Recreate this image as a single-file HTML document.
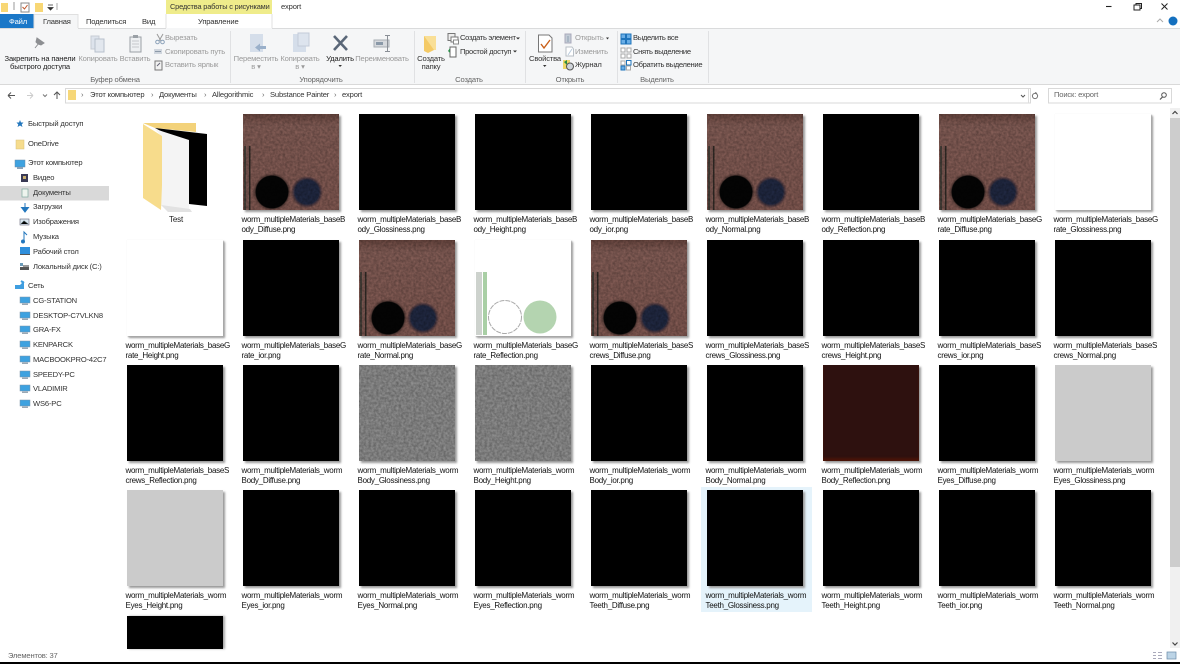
<!DOCTYPE html>
<html><head><meta charset="utf-8"><style>
html,body{margin:0;padding:0;width:1180px;height:664px;overflow:hidden;background:#fff}
body{position:relative;font-family:"Liberation Sans","Noto Sans CJK SC",sans-serif;color:#222;filter:blur(.3px)}
.t{position:absolute;white-space:nowrap;font-size:7.6px;letter-spacing:-.17px;line-height:10px;height:10px;color:#333}
.m{letter-spacing:-.32px}
.g{color:#9a9a9a}.c{transform:translateX(-50%)}.k{color:#666}
.s{position:absolute;left:0;top:0}
.r{position:absolute;width:1px;top:31px;height:52px;background:#e0e1e3}
.i{position:absolute;width:116px;height:125px}
.i i{position:absolute;left:0;top:0;width:96px;height:96px;box-shadow:2px 2px 2px #999;display:block}
.i span{position:absolute;left:-1.5px;top:101px;width:112px;font-size:8px;letter-spacing:-.27px;line-height:10px;color:#111;white-space:pre}
.b i{background:#000}
.w i{background:#fff;box-shadow:1px 1px 1px #aaa,2px 2px 2px #999,0 0 1px #eee}
.l i{background:#cbcbcb}
.n i{background:#7a7a7a}
.e i{background:#2e110f;box-shadow:2px 2px 2px #999,inset 0 -3px 2px #4a1408}
.d i{background:
radial-gradient(circle at 29px 78px,#030303 0 16px,rgba(0,0,0,.3) 17px,transparent 19px),
radial-gradient(circle at 64px 78px,#1b2238 0 12px,rgba(20,20,40,.45) 14px,transparent 16px),
linear-gradient(90deg,transparent 1px,#3c3630 1px 3px,#6a4b46 3px 6px,#2a2420 6px 7.5px,transparent 7.5px) 0 32px/100% 64px no-repeat,
linear-gradient(180deg,#5a3c36 0,#71504a 12%,#6e4b45 100%)}
.n i::after,.d i::after{content:"";position:absolute;left:0;top:0;width:96px;height:96px;background:#808080;filter:url(#gn);mix-blend-mode:overlay;opacity:.22}
</style></head><body>
<svg width="0" height="0" style="position:absolute"><filter id="gn" x="0" y="0" width="100%" height="100%" color-interpolation-filters="sRGB"><feTurbulence type="fractalNoise" baseFrequency=".4" numOctaves="2" seed="3"/><feColorMatrix values="1.200 0 0 0 -.1  1.200 0 0 0 -.1  1.200 0 0 0 -.1  0 0 0 0 1"/></filter></svg>

<!-- title bar -->
<svg class="s" width="1180" height="664" style="z-index:0">
<rect x="166" y="0" width="106" height="14" fill="#efec8b"/>
<rect x="0" y="14" width="34" height="14" fill="#1b78c8"/>
<rect x="0" y="28" width="1180" height="56" fill="#f5f6f7"/>
<rect x="34" y="14" width="44" height="15" fill="#f5f6f7"/>
<path d="M0 28.5H34M78 28.5H166M272 28.5H1180" stroke="#dadbdc"/>
<path d="M34 28V14.5H78V28M166 28V14M272 28V14" stroke="#e0e0e0" fill="none"/>
<rect x="0" y="84" width="1180" height="1" fill="#d9d9d9"/>
<rect x="1" y="3" width="7" height="9" fill="#f8d775"/>
<path d="M14 2V10" stroke="#999"/>
<rect x="21" y="3" width="8" height="9" fill="#fff" stroke="#888"/><path d="M22.5 7l2 2 3-4" stroke="#c0572a" fill="none"/>
<rect x="35" y="3" width="8" height="9" fill="#f8d775"/>
<path d="M48 5H53M48 7.5H53L50.5 10Z" stroke="#333" stroke-width=".8" fill="#333"/>
<path d="M57 3V10" stroke="#aaa"/>
<!-- window controls -->
<path d="M1106 6.5H1111.5" stroke="#222" stroke-width="1.1"/>
<path d="M1134 5H1140V10H1134ZM1136 5V3.5H1141.5V8.5H1140" stroke="#222" fill="none"/>
<path d="M1161.5 3.5L1167.5 9.5M1167.5 3.5L1161.5 9.5" stroke="#222"/>
<path d="M1157 22L1160 19L1163 22" stroke="#aaa" fill="none"/>
<circle cx="1173" cy="21" r="4.5" fill="#1470bf"/>
<!-- pin -->
<path d="M35 48L39 43M37 38L44 43L41 45L38 44L36 42Z" fill="#8d8f92" stroke="#8d8f92"/>
<!-- copy -->
<path d="M91 36H99V49H91Z" fill="#dde3ec" stroke="#c6ccd4"/><path d="M95 39H104V52H95Z" fill="#e2e7ee" stroke="#b8c0cc"/>
<!-- paste -->
<path d="M130 37H141V52H130Z" fill="#eef0f2" stroke="#9aa0a6"/><rect x="133" y="35" width="5" height="3" fill="#9aa0a6"/><path d="M132 41H139M132 44H139M132 47H139" stroke="#c6c9cc"/>
<!-- cut, path, shortcut -->
<path d="M157 34L161 41M163 34L159 41" stroke="#9a9a9a"/><circle cx="157.5" cy="42" r="1.8" fill="none" stroke="#8aa0b8"/><circle cx="162.5" cy="42" r="1.8" fill="none" stroke="#8aa0b8"/>
<rect x="154" y="49" width="8" height="5" fill="#d0d6de"/><path d="M155 51.5H161" stroke="#8c99a8"/>
<rect x="155" y="61" width="7" height="9" fill="#f2f2f2" stroke="#777"/><path d="M157 66L160 63" stroke="#667"/>
<!-- move/copy to -->
<rect x="250" y="34" width="13" height="18" fill="#d5deea"/><path d="M255 47.5L260 43.5V46H266V49H260V51.5Z" fill="#9ab0ca"/>
<rect x="293" y="34" width="13" height="18" fill="#d5deea"/><path d="M298 33H309V46H298Z" fill="#dde4ee" stroke="#c2cbd8"/>
<!-- delete -->
<path d="M334 36L347 50M347 36L334 50" stroke="#5a6778" stroke-width="2.6"/>
<!-- rename -->
<rect x="374" y="40" width="15" height="7" fill="#d6d9dd" stroke="#a8adb3"/><rect x="376" y="42" width="7" height="3" fill="#8a99a8"/>
<path d="M387.5 36V51M385 35.5H390M385 51.5H390" stroke="#8a8f96"/>
<!-- new folder -->
<path d="M424 36L434 37V50L428 53L424 51Z" fill="#f4ca66"/><path d="M424 36L436 36V50H434" fill="#f9df96"/>
<!-- create item -->
<rect x="448" y="33.5" width="7" height="7" fill="#eee" stroke="#777"/><rect x="451" y="37" width="7" height="5" fill="#fff" stroke="#777"/><rect x="453.5" y="40" width="5" height="4" fill="#fff" stroke="#888"/>
<path d="M450 47H456V57H450Z" fill="#fff" stroke="#666"/><path d="M448 51L450 48V53Z" fill="#2e8b4a"/>
<!-- properties -->
<path d="M538.5 35H549L552 38V52H538.5Z" fill="#fff" stroke="#777"/><path d="M541 44L544 48L550 40" stroke="#c95f18" stroke-width="1.4" fill="none"/>
<!-- open -->
<rect x="565" y="34" width="6" height="9" fill="#c3ccd6" stroke="#aab"/><path d="M568 36V42" stroke="#8fa0b2"/>
<path d="M566 47H572L573.5 49V56H566Z" fill="#fff" stroke="#b8bfc6"/><path d="M568 55L572 49" stroke="#bcd"/>
<rect x="563" y="60" width="7" height="9" fill="#eed667"/><circle cx="570" cy="66.5" r="3.5" fill="#cfd4da" stroke="#555"/><path d="M564 62L567 60V65Z" fill="#2a8a3c"/>
<!-- select -->
<g fill="#6aaee6" stroke="#1f74bb"><rect x="621" y="34" width="4.5" height="4.5"/><rect x="626.5" y="34" width="4.5" height="4.5"/><rect x="621" y="39.5" width="4.5" height="4.5"/><rect x="626.5" y="39.5" width="4.5" height="4.5"/></g>
<g fill="#fff" stroke="#a8a8a8"><rect x="621" y="48" width="4" height="4"/><rect x="627" y="48" width="4" height="4"/><rect x="621" y="54" width="4" height="4"/><rect x="627" y="54" width="4" height="4"/></g>
<g stroke="#1f74bb"><rect x="621" y="66" width="4" height="4" fill="#6aaee6"/><rect x="626.5" y="60.5" width="4.5" height="4.5" fill="#fff"/><rect x="621" y="61" width="4" height="4" fill="#fff" stroke="#aaa"/><rect x="626.5" y="66" width="4" height="4" fill="#fff" stroke="#aaa"/></g>
<!-- dropdown arrows -->
<path d="M516 37.5H520L518 39.5ZM513 50.5H517L515 52.5ZM606 37.5H609L607.5 39.5Z" fill="#333"/>
<path d="M338.5 65H342L340 67ZM543 65H546.5L544.7 67Z" fill="#333"/>
<!-- address bar -->
<path d="M8 95.5H15M8 95.5L11 92.5M8 95.5L11 98.5" stroke="#555" fill="none"/>
<path d="M33 95.5H27M33 95.5L30 92.5M33 95.5L30 98.5" stroke="#ccc" fill="none"/>
<path d="M43 94.5L45 96.5L47 94.5" stroke="#777" fill="none"/>
<path d="M57 99V92M54 95L57 92L60 95" stroke="#555" fill="none"/>
<rect x="65.5" y="88.5" width="965" height="14.5" fill="#fff" stroke="#d9d9d9"/>
<rect x="68" y="90" width="8" height="10" fill="#f6d778"/>
<path d="M1021 95L1023 97L1025 95" stroke="#555" fill="none"/>
<path d="M1028.5 89V103" stroke="#ddd"/>
<circle cx="1035" cy="96" r="2.6" fill="none" stroke="#777"/><path d="M1035 92.5L1037 93.5" stroke="#777"/>
<rect x="1048.5" y="88.5" width="123" height="14.5" fill="#fff" stroke="#d9d9d9"/>
<circle cx="1164" cy="95" r="2.3" fill="none" stroke="#555"/><path d="M1162.5 97L1160 99.5" stroke="#555" stroke-width="1.2"/>
<!-- sidebar -->
<rect x="0" y="186" width="109" height="14.5" fill="#d9d9d9"/>
<path d="M20 120L21 122.5H23.5L21.7 124.5L22.5 127L20 125.5L17.5 127L18.3 124.5L16.5 122.5H19Z" fill="#2377bd"/>
<rect x="16" y="140" width="8" height="9" fill="#f6dc8d" stroke="#d8c078" stroke-width=".5"/>
<g><rect x="15" y="160" width="10" height="7" fill="#3ea2e0" stroke="#6a8aa8" stroke-width=".5"/><rect x="17" y="167" width="6" height="2" fill="#8aa2b8"/></g>
<rect x="21" y="174" width="7" height="8" fill="#3a3a55"/><rect x="23" y="176" width="3" height="3" fill="#c9b070"/>
<rect x="22" y="189" width="6" height="8" fill="#eef4ee" stroke="#7fa8a0" stroke-width=".7"/>
<path d="M25 203V208M21.5 207.5H28.5L25 212Z" fill="#2377bd" stroke="#2377bd"/>
<rect x="20" y="219" width="9" height="6" fill="#d9e6f0" stroke="#667" stroke-width=".6"/><path d="M21 224L24 221L28 224" stroke="#344" stroke-width=".7"/>
<path d="M24 242V232L27 235" stroke="#2377bd" fill="none"/><circle cx="23" cy="241.5" r="2" fill="#2377bd"/>
<rect x="20" y="247" width="10" height="7" fill="#2f8fdc"/><rect x="20" y="254" width="10" height="1" fill="#555"/>
<rect x="20" y="263" width="3" height="3" fill="#6a9ab8"/><rect x="20" y="267" width="9" height="3" fill="#555"/><rect x="23" y="265" width="6" height="2" fill="#999"/>
<path d="M15 285H20L24 281L24 289H15Z" fill="#3f9ee0"/><path d="M21 281L24 283" stroke="#3f9ee0" stroke-width="2"/>
<g fill="#3ea2e0" stroke="#7b93a8" stroke-width=".5">
<rect x="20" y="297" width="10" height="6"/><rect x="20" y="312" width="10" height="6"/><rect x="20" y="326" width="10" height="6"/><rect x="20" y="341" width="10" height="6"/><rect x="20" y="356" width="10" height="6"/><rect x="20" y="371" width="10" height="6"/><rect x="20" y="385" width="10" height="6"/><rect x="20" y="400" width="10" height="6"/></g>
<g fill="#9aa8b4"><rect x="22" y="303.5" width="6" height="1.5"/><rect x="22" y="318.5" width="6" height="1.5"/><rect x="22" y="332.5" width="6" height="1.5"/><rect x="22" y="347.5" width="6" height="1.5"/><rect x="22" y="362.5" width="6" height="1.5"/><rect x="22" y="377.5" width="6" height="1.5"/><rect x="22" y="391.5" width="6" height="1.5"/><rect x="22" y="406.5" width="6" height="1.5"/></g>
<!-- scrollbar -->
<rect x="1170" y="108" width="10" height="540" fill="#f0f0f0"/>
<rect x="1170" y="118" width="10" height="449" fill="#cdcdcd"/>
<path d="M1172.5 114L1175 111.5L1177.5 114" stroke="#444" fill="none" stroke-width="1.2"/>
<path d="M1172.5 642.5L1175 645L1177.5 642.5" stroke="#444" fill="none" stroke-width="1.2"/>
<!-- view icons -->
<path d="M1153 652.5H1156M1153 655.5H1156M1153 658.5H1156M1158 652.5H1162M1158 655.5H1162M1158 658.5H1162" stroke="#aab" />
<rect x="1167" y="652" width="9" height="7" fill="#bcd4e6" stroke="#6a8aa8" stroke-width=".7"/>
<rect x="0" y="662" width="1180" height="2" fill="#000"/>
</svg>

<div class="r" style="left:230px"></div><div class="r" style="left:414px"></div><div class="r" style="left:525px"></div><div class="r" style="left:617px"></div><div class="r" style="left:708px"></div>

<span class="t" style="left:9px;top:17px;color:#fff">Файл</span>
<span class="t" style="left:43px;top:17px">Главная</span>
<span class="t" style="left:86px;top:17px">Поделиться</span>
<span class="t" style="left:142px;top:17px">Вид</span>
<span class="t" style="left:170px;top:2px;font-size:7.4px">Средства работы с рисунками</span>
<span class="t" style="left:198px;top:17px">Управление</span>
<span class="t" style="left:281px;top:2px">export</span>

<span class="t c" style="left:40px;top:54px;color:#222">Закрепить на панели</span>
<span class="t c" style="left:40px;top:62px;color:#222">быстрого доступа</span>
<span class="t c g" style="left:98px;top:54px">Копировать</span>
<span class="t c g" style="left:135px;top:54px">Вставить</span>
<span class="t g" style="left:165px;top:33px">Вырезать</span>
<span class="t g" style="left:165px;top:47px">Скопировать путь</span>
<span class="t g" style="left:165px;top:60px">Вставить ярлык</span>
<span class="t c k" style="left:115px;top:75px">Буфер обмена</span>
<span class="t c g" style="left:256px;top:54px">Переместить</span>
<span class="t c g" style="left:256px;top:62px">в ▾</span>
<span class="t c g" style="left:300px;top:54px">Копировать</span>
<span class="t c g" style="left:300px;top:62px">в ▾</span>
<span class="t c" style="left:340px;top:54px;color:#222">Удалить</span>
<span class="t c g" style="left:382px;top:54px">Переименовать</span>
<span class="t c k" style="left:321px;top:75px">Упорядочить</span>
<span class="t c" style="left:431px;top:54px">Создать</span>
<span class="t c" style="left:431px;top:62px">папку</span>
<span class="t m" style="left:460px;top:33px">Создать элемент</span>
<span class="t m" style="left:460px;top:47px">Простой доступ</span>
<span class="t c k" style="left:469px;top:75px">Создать</span>
<span class="t c" style="left:545px;top:54px">Свойства</span>
<span class="t g" style="left:575px;top:33px">Открыть</span>
<span class="t g" style="left:575px;top:47px">Изменить</span>
<span class="t" style="left:575px;top:60px">Журнал</span>
<span class="t c k" style="left:570px;top:75px">Открыть</span>
<span class="t m" style="left:633px;top:33px">Выделить все</span>
<span class="t m" style="left:633px;top:47px">Снять выделение</span>
<span class="t m" style="left:633px;top:60px">Обратить выделение</span>
<span class="t c k" style="left:657px;top:75px">Выделить</span>

<span class="t k" style="left:81px;top:90px">›</span>
<span class="t" style="left:90px;top:90px">Этот компьютер</span>
<span class="t k" style="left:151px;top:90px">›</span>
<span class="t" style="left:159px;top:90px">Документы</span>
<span class="t k" style="left:204px;top:90px">›</span>
<span class="t" style="left:212px;top:90px">Allegorithmic</span>
<span class="t k" style="left:262px;top:90px">›</span>
<span class="t" style="left:270px;top:90px">Substance Painter</span>
<span class="t k" style="left:334px;top:90px">›</span>
<span class="t" style="left:342px;top:90px">export</span>
<span class="t k" style="left:1054px;top:90px">Поиск: export</span>

<span class="t" style="left:28px;top:119px">Быстрый доступ</span>
<span class="t" style="left:28px;top:139px">OneDrive</span>
<span class="t" style="left:28px;top:158px">Этот компьютер</span>
<span class="t" style="left:33px;top:173px">Видео</span>
<span class="t" style="left:33px;top:188px">Документы</span>
<span class="t" style="left:33px;top:202px">Загрузки</span>
<span class="t" style="left:33px;top:217px">Изображения</span>
<span class="t" style="left:33px;top:232px">Музыка</span>
<span class="t" style="left:33px;top:247px">Рабочий стол</span>
<span class="t" style="left:33px;top:262px">Локальный диск (C:)</span>
<span class="t" style="left:28px;top:281px">Сеть</span>
<span class="t" style="left:33px;top:296px">CG-STATION</span>
<span class="t" style="left:33px;top:311px">DESKTOP-C7VLKN8</span>
<span class="t" style="left:33px;top:325px">GRA-FX</span>
<span class="t" style="left:33px;top:340px">KENPARCK</span>
<span class="t" style="left:33px;top:355px">MACBOOKPRO-42C7</span>
<span class="t" style="left:33px;top:370px">SPEEDY-PC</span>
<span class="t" style="left:33px;top:384px">VLADIMIR</span>
<span class="t" style="left:33px;top:399px">WS6-PC</span>
<span class="t k" style="left:8px;top:651px">Элементов: 37</span>

<!-- folder -->
<svg class="s" width="1180" height="664" style="pointer-events:none">
<path d="M143 123H196V132L155 128Z" fill="#f3d27a"/>
<path d="M155 128L207 134V206L189 204V146Z" fill="#000"/>
<path d="M155 129L189 140V212L165 208L161 205V136Z" fill="#f4f4f4"/>
<path d="M161 205L190 209L192 212H168Z" fill="#e2e2e2"/>
<path d="M143 124L162 136V185L161 210L143 198Z" fill="#f7dc8c"/>
</svg>
<span class="t" style="left:169px;top:215px;font-size:8px;color:#222">Test</span>

<div style="position:absolute;left:701px;top:487px;width:111px;height:125px;background:#e5f3fb"></div>

<!-- row 1 -->
<div class="i d" style="left:243px;top:114px"><i></i><span>worm_multipleMaterials_baseB
ody_Diffuse.png</span></div>
<div class="i b" style="left:359px;top:114px"><i></i><span>worm_multipleMaterials_baseB
ody_Glossiness.png</span></div>
<div class="i b" style="left:475px;top:114px"><i></i><span>worm_multipleMaterials_baseB
ody_Height.png</span></div>
<div class="i b" style="left:591px;top:114px"><i></i><span>worm_multipleMaterials_baseB
ody_ior.png</span></div>
<div class="i d" style="left:707px;top:114px"><i></i><span>worm_multipleMaterials_baseB
ody_Normal.png</span></div>
<div class="i b" style="left:823px;top:114px"><i></i><span>worm_multipleMaterials_baseB
ody_Reflection.png</span></div>
<div class="i d" style="left:939px;top:114px"><i></i><span>worm_multipleMaterials_baseG
rate_Diffuse.png</span></div>
<div class="i w" style="left:1055px;top:114px"><i></i><span>worm_multipleMaterials_baseG
rate_Glossiness.png</span></div>
<!-- row 2 -->
<div class="i w" style="left:127px;top:240px"><i></i><span>worm_multipleMaterials_baseG
rate_Height.png</span></div>
<div class="i b" style="left:243px;top:240px"><i></i><span>worm_multipleMaterials_baseG
rate_ior.png</span></div>
<div class="i d" style="left:359px;top:240px"><i></i><span>worm_multipleMaterials_baseG
rate_Normal.png</span></div>
<div class="i w" style="left:475px;top:240px"><i></i><svg style="position:absolute;left:0;top:0" width="96" height="96"><rect x="1" y="32" width="6" height="63" fill="#cdd2cd"/><rect x="8" y="32" width="4" height="63" fill="#a9cfa5"/><circle cx="30" cy="77" r="16.5" fill="#fff" stroke="#aaa" stroke-dasharray="5 1"/><circle cx="65" cy="77" r="16.5" fill="#b4d4b0"/></svg><span>worm_multipleMaterials_baseG
rate_Reflection.png</span></div>
<div class="i d" style="left:591px;top:240px"><i></i><span>worm_multipleMaterials_baseS
crews_Diffuse.png</span></div>
<div class="i b" style="left:707px;top:240px"><i></i><span>worm_multipleMaterials_baseS
crews_Glossiness.png</span></div>
<div class="i b" style="left:823px;top:240px"><i></i><span>worm_multipleMaterials_baseS
crews_Height.png</span></div>
<div class="i b" style="left:939px;top:240px"><i></i><span>worm_multipleMaterials_baseS
crews_ior.png</span></div>
<div class="i b" style="left:1055px;top:240px"><i></i><span>worm_multipleMaterials_baseS
crews_Normal.png</span></div>
<!-- row 3 -->
<div class="i b" style="left:127px;top:365px"><i></i><span>worm_multipleMaterials_baseS
crews_Reflection.png</span></div>
<div class="i b" style="left:243px;top:365px"><i></i><span>worm_multipleMaterials_worm
Body_Diffuse.png</span></div>
<div class="i n" style="left:359px;top:365px"><i></i><span>worm_multipleMaterials_worm
Body_Glossiness.png</span></div>
<div class="i n" style="left:475px;top:365px"><i></i><span>worm_multipleMaterials_worm
Body_Height.png</span></div>
<div class="i b" style="left:591px;top:365px"><i></i><span>worm_multipleMaterials_worm
Body_ior.png</span></div>
<div class="i b" style="left:707px;top:365px"><i></i><span>worm_multipleMaterials_worm
Body_Normal.png</span></div>
<div class="i e" style="left:823px;top:365px"><i></i><span>worm_multipleMaterials_worm
Body_Reflection.png</span></div>
<div class="i b" style="left:939px;top:365px"><i></i><span>worm_multipleMaterials_worm
Eyes_Diffuse.png</span></div>
<div class="i l" style="left:1055px;top:365px"><i></i><span>worm_multipleMaterials_worm
Eyes_Glossiness.png</span></div>
<!-- row 4 -->
<div class="i l" style="left:127px;top:490px"><i></i><span>worm_multipleMaterials_worm
Eyes_Height.png</span></div>
<div class="i b" style="left:243px;top:490px"><i></i><span>worm_multipleMaterials_worm
Eyes_ior.png</span></div>
<div class="i b" style="left:359px;top:490px"><i></i><span>worm_multipleMaterials_worm
Eyes_Normal.png</span></div>
<div class="i b" style="left:475px;top:490px"><i></i><span>worm_multipleMaterials_worm
Eyes_Reflection.png</span></div>
<div class="i b" style="left:591px;top:490px"><i></i><span>worm_multipleMaterials_worm
Teeth_Diffuse.png</span></div>
<div class="i b" style="left:707px;top:490px"><i></i><span>worm_multipleMaterials_worm
Teeth_Glossiness.png</span></div>
<div class="i b" style="left:823px;top:490px"><i></i><span>worm_multipleMaterials_worm
Teeth_Height.png</span></div>
<div class="i b" style="left:939px;top:490px"><i></i><span>worm_multipleMaterials_worm
Teeth_ior.png</span></div>
<div class="i b" style="left:1055px;top:490px"><i></i><span>worm_multipleMaterials_worm
Teeth_Normal.png</span></div>
<!-- row 5 -->
<div style="position:absolute;left:127px;top:616px;width:96px;height:33px;background:#000;box-shadow:2px 0 2px #aaa"></div>
</body></html>
